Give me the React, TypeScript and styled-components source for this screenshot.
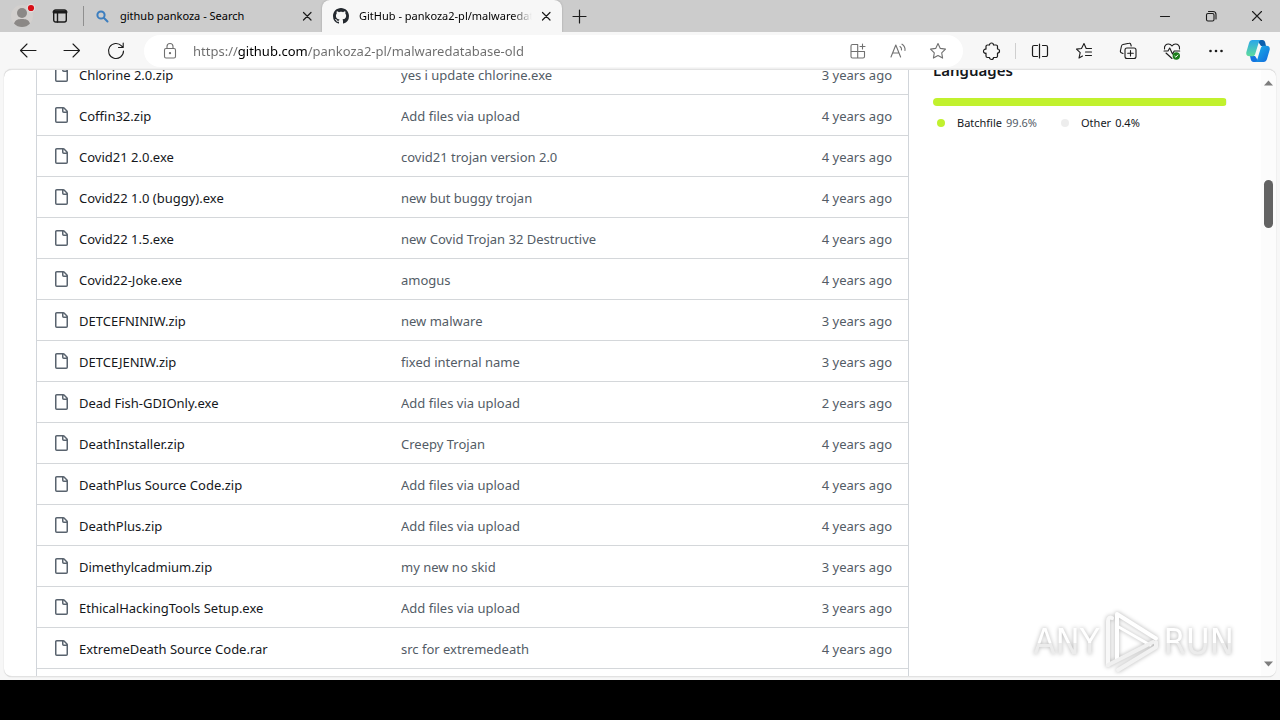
import React from "react";
import styled, { createGlobalStyle, css } from "styled-components";

const GlobalStyle = createGlobalStyle`
  *, *::before, *::after { box-sizing: border-box; }
  body {
    margin: 0;
    background: #000;
    font-family: "Noto Sans", "Open Sans", sans-serif;
    font-size: 13px;
    color: #15181c;
  }
  button, input { font: inherit; color: inherit; margin: 0; padding: 0; border: 0; background: none; }
  a { color: inherit; text-decoration: none; }
  svg { display: block; flex: none; }
`;

const Screen = styled.div`
  display: flex;
  flex-direction: column;
  height: 100vh;
`;

const BrowserWindow = styled.div`
  flex: 1;
  min-height: 0;
  display: flex;
  flex-direction: column;
  background: #f7f7f7;
`;

const Taskbar = styled.footer`
  height: 40px;
  background: #000;
`;

/* Tab strip */

const TitleBar = styled.header`
  display: flex;
  height: 32px;
  flex: none;
  background: #cccccc;
`;

const ProfileArea = styled.div`
  display: flex;
  align-items: center;
  width: 84px;
  padding-left: 6px;
  gap: 6px;
  &::after {
    content: "";
    width: 1px;
    height: 20px;
    margin-left: auto;
    background: #8f8f8f;
  }
`;

const SquareButton = styled.button`
  width: 32px;
  height: 32px;
  flex: none;
  display: grid;
  place-items: center;
`;

const Tabs = styled.div`
  display: flex;
  min-width: 0;
  margin-right: 1px;
`;

const Tab = styled.div<{ $active?: boolean }>`
  display: flex;
  align-items: center;
  min-width: 0;
  ${(p) =>
    p.$active
      ? css`
          width: 240px;
          padding: 0 8px 0 11px;
          background: #f7f7f7;
          border-radius: 8px 8px 0 0;
          box-shadow: 0 0 2px #999;
          clip-path: inset(0 -2px 0 -2px);
        `
      : css`
          width: 238px;
          padding: 0 7px 0 10px;
        `}
`;

const TabLabel = styled.button<{ $fade?: boolean }>`
  flex: 1;
  min-width: 0;
  display: flex;
  align-items: center;
  gap: 10px;
  margin-right: 6px;
  font-size: 11px;
  line-height: 16px;
  color: #000;
  white-space: nowrap;
  overflow: hidden;
  ${(p) =>
    p.$fade &&
    css`
      mask-image: linear-gradient(to right, #000 90%, transparent 100%);
    `}
`;

const TabClose = styled.button`
  width: 16px;
  height: 16px;
  display: grid;
  place-items: center;
`;

const CaptionButtons = styled.div`
  display: flex;
  margin-left: auto;
`;

const CaptionButton = styled.button`
  width: 46px;
  height: 32px;
  display: grid;
  place-items: center;
`;

/* Toolbar */

const Toolbar = styled.div`
  display: flex;
  align-items: center;
  height: 37px;
  flex: none;
  padding: 0 2px 0 6px;
`;

const ToolButton = styled.button<{ $w?: number }>`
  width: ${(p) => p.$w ?? 44}px;
  height: 32px;
  flex: none;
  display: grid;
  place-items: center;
`;

const AddressBar = styled.div`
  flex: 1;
  min-width: 0;
  display: flex;
  align-items: center;
  height: 32px;
  margin: 0 7px 0 6px;
  padding: 0 5px 0 10px;
  border-radius: 16px;
  background: #fff;
`;

const SiteButton = styled.button`
  width: 32px;
  height: 32px;
  display: grid;
  place-items: center;
`;

const UrlInput = styled.input`
  flex: 1;
  min-width: 0;
  height: 24px;
  margin-left: 7px;
  outline: none;
  font-size: 13px;
  color: transparent;
  background: linear-gradient(to right, #6c6c6c 45px, #000 45px, #000 115px, #6c6c6c 115px);
  background-clip: text;
  -webkit-background-clip: text;
`;

const ToolDivider = styled.span`
  width: 1px;
  height: 16px;
  margin: 0 2px 0 1px;
  background: #cfcfcf;
`;

/* Page */

const Viewport = styled.div`
  position: relative;
  flex: 1;
  min-height: 0;
  display: flex;
  margin: 0 4px 3px;
  border: 1px solid #e2e2e2;
  border-width: 1px 0;
  border-radius: 8px;
  box-shadow: 0 0 1px #bbb;
  background: #fff;
  overflow: hidden;
`;

const PageBody = styled.main`
  flex: 1;
  min-width: 0;
  display: flex;
  gap: 24px;
  margin-top: -17px;
  padding: 0 34px 0 32px;
`;

const FileTable = styled.table`
  flex: 1;
  min-width: 0;
  align-self: flex-start;
  table-layout: fixed;
  border-collapse: separate;
  border-spacing: 0;
  border: 1px solid #d1d5da;
  border-width: 0 1px;
  line-height: 20px;
`;

const Cell = styled.td<{ $kind: "name" | "message" | "age" }>`
  height: 41px;
  padding: 2px 0 0;
  border-top: 1px solid #d4d7da;
  white-space: nowrap;
  overflow: hidden;
  color: #535c66;
  ${(p) => p.$kind === "name" && css`width: 364px; padding-left: 16px; color: #15181c;`}
  ${(p) => p.$kind === "age" && css`width: 136px; padding-right: 16px; text-align: right;`}
`;

const FileName = styled.div`
  display: flex;
  align-items: center;
  gap: 10px;
  svg { margin-bottom: 2px; }
`;

const Sidebar = styled.aside`
  width: 294px;
  flex: none;
  padding-top: 5px;
`;

const SidebarTitle = styled.h2`
  margin: 0 0 16px;
  font-size: 15px;
  font-weight: 600;
  line-height: 24px;
`;

const LanguageBar = styled.div`
  display: flex;
  height: 8px;
  border-radius: 6px;
  overflow: hidden;
`;

const LanguageShare = styled.span<{ $color: string; $last?: boolean }>`
  ${(p) => (p.$last ? "width: 1px;" : "flex: 1;")}
  background: ${(p) => p.$color};
`;

const Legend = styled.ul`
  display: flex;
  gap: 24px;
  margin: 7px 0 0;
  padding: 0 0 0 4px;
  list-style: none;
  font-size: 11px;
  line-height: 20px;
`;

const LegendItem = styled.li<{ $color: string }>`
  display: flex;
  align-items: center;
  gap: 4px;
  &::before {
    content: "";
    width: 8px;
    height: 8px;
    margin-right: 8px;
    border-radius: 50%;
    background: ${(p) => p.$color};
  }
`;

const Muted = styled.span`
  color: #535c66;
`;

const Scrollbar = styled.div`
  display: flex;
  flex-direction: column;
  align-items: center;
  width: 15px;
  padding: 10px 0 9px;
  background: #fcfcfc;
`;

const ScrollTrack = styled.div`
  flex: 1;
  padding-top: 94px;
`;

const ScrollThumb = styled.div`
  width: 9px;
  height: 48px;
  border-radius: 5px;
  background: #636363;
`;

const Watermark = styled.div`
  position: absolute;
  right: 42px;
  bottom: 2px;
  display: flex;
  align-items: center;
  gap: 3px;
  filter: drop-shadow(0 0 2px rgba(0, 0, 0, 0.3));
  pointer-events: none;
`;

const WatermarkText = styled.span`
  font-family: "Liberation Sans Narrow", "DejaVu Sans Condensed", sans-serif;
  font-size: 36px;
  line-height: 64px;
  color: transparent;
  background: linear-gradient(#fff 52%, #ececec 52%);
  background-clip: text;
  -webkit-background-clip: text;
`;

/* Icons */

type IconProps = { size?: number; color?: string; w?: number; children: React.ReactNode };

const Icon = ({ size = 20, color = "#1b1b1b", w = 1.1, children }: IconProps) => (
  <svg
    width={size}
    height={size}
    viewBox={`0 0 ${size} ${size}`}
    fill="none"
    stroke={color}
    strokeWidth={w}
    strokeLinecap="round"
    strokeLinejoin="round"
    aria-hidden="true"
  >
    {children}
  </svg>
);

const CloseIcon = () => (
  <Icon size={16} w={1.2}>
    <path d="M4.5 4.500l7.500 7.500M12 4.500l-7.500 7.500" />
  </Icon>
);

const FileIcon = () => (
  <svg width="16" height="16" viewBox="0 0 16 16" fill="#59636e" aria-hidden="true">
    <path d="M2 1.75C2 .784 2.784 0 3.75 0h6.586c.464 0 .909.184 1.237.513l2.914 2.914c.329.328.513.773.513 1.237v9.586A1.75 1.75 0 0 1 13.25 16h-9.5A1.75 1.75 0 0 1 2 14.25Zm1.75-.25a.25.25 0 0 0-.25.25v12.5c0 .138.112.25.25.25h9.5a.25.25 0 0 0 .25-.25V6h-2.75A1.75 1.75 0 0 1 9 4.25V1.5Zm6.75.062V4.25c0 .138.112.25.25.25h2.688l-.011-.013-2.914-2.914-.013-.011Z" />
  </svg>
);

const GitHubMark = () => (
  <svg width="16" height="16" viewBox="0 0 16 16" fill="#24292f" aria-hidden="true">
    <path d="M8 0c4.42 0 8 3.58 8 8a8.013 8.013 0 0 1-5.45 7.59c-.4.08-.55-.17-.55-.38 0-.27.01-1.13.01-2.2 0-.75-.25-1.23-.54-1.48 1.78-.2 3.65-.88 3.65-3.95 0-.88-.31-1.59-.82-2.15.08-.2.36-1.02-.08-2.12 0 0-.67-.22-2.2.82-.64-.18-1.32-.27-2-.27-.68 0-1.36.09-2 .27-1.53-1.03-2.2-.82-2.2-.82-.44 1.1-.16 1.92-.08 2.12-.51.56-.82 1.28-.82 2.15 0 3.06 1.86 3.75 3.64 3.95-.23.2-.44.55-.51 1.07-.46.21-1.61.55-2.33-.66-.15-.24-.6-.83-1.23-.82-.67.01-.27.38.01.53.34.19.73.9.82 1.13.16.45.68 1.31 2.69.94 0 .67.01 1.3.01 1.49 0 .21-.15.45-.55.38A7.995 7.995 0 0 1 0 8c0-4.42 3.58-8 8-8Z" />
  </svg>
);

const AvatarIcon = () => (
  <svg width="28" height="28" viewBox="0 0 28 28" aria-hidden="true">
    <circle cx="14" cy="14" r="11" fill="#d3d0ce" />
    <circle cx="14" cy="11" r="5" fill="#8b8886" />
    <path d="M6 21.5c1.5-4 4.500-4.500 8-4.500s6.500.5 8 4.500c-2 2.500-5 3.500-8 3.500s-6-1-8-3.500Z" fill="#8b8886" />
    <circle cx="23" cy="6" r="4.200" fill="#e4dcdc" />
    <circle cx="23" cy="6" r="3.100" fill="#d80f17" />
  </svg>
);

const CopilotIcon = () => (
  <svg width="24" height="24" viewBox="0 0 24 24" aria-hidden="true">
    <defs>
      <linearGradient id="cpA" x1="0" y1="0" x2="0" y2="1">
        <stop offset="0" stopColor="#2aa6ea" />
        <stop offset="1" stopColor="#5fdc9c" />
      </linearGradient>
      <linearGradient id="cpB" x1="0" y1="0" x2="1" y2="1">
        <stop offset="0" stopColor="#1bb5e8" />
        <stop offset="1" stopColor="#1268dc" />
      </linearGradient>
    </defs>
    <path d="M11 1h5.500c1.500 0 2.300 1 2.700 2.500L20 7h-5Z" fill="#0b5fae" />
    <path d="M13 23H7.500c-1.500 0-2.300-1-2.700-2.500L4 17h5Z" fill="#1474e0" />
    <path d="M6.500 1H15c-1.500.5-2 1.500-2.500 3.200L9.200 15c-.5 1.700-1.500 2.300-3 2.300H3.500C.8 17.300-.2 15.500.4 13L3 4c.6-2 1.700-3 3.500-3Z" fill="url(#cpA)" />
    <path d="M17.500 23H9c1.500-.5 2-1.500 2.500-3.200L14.800 9c.5-1.700 1.500-2.300 3-2.300h2.700c2.700 0 3.700 1.800 3.100 4.300L21 20c-.6 2-1.700 3-3.500 3Z" fill="url(#cpB)" />
  </svg>
);

const PlayMark = () => (
  <svg width="58" height="64" viewBox="0 0 58 64" fill="none" stroke="#fff" strokeLinejoin="round" strokeLinecap="round" aria-hidden="true">
    <path d="M5 55V11c0-3 2-4 4-3" strokeWidth="4" stroke="#f8f8f8" />
    <path d="M14 49V4l39 24.500" strokeWidth="4" />
    <path d="M14 16l33 19" strokeWidth="3" />
    <path d="M5 55l45-23" strokeWidth="4" stroke="#f0f0f0" />
    <path d="M15 60l38-23v-5" strokeWidth="4" stroke="#f2f2f2" />
  </svg>
);

/* Content */

const files: [string, string, string][] = [
  ["Chlorine 2.0.zip", "yes i update chlorine.exe", "3 years ago"],
  ["Coffin32.zip", "Add files via upload", "4 years ago"],
  ["Covid21 2.0.exe", "covid21 trojan version 2.0", "4 years ago"],
  ["Covid22 1.0 (buggy).exe", "new but buggy trojan", "4 years ago"],
  ["Covid22 1.5.exe", "new Covid Trojan 32 Destructive", "4 years ago"],
  ["Covid22-Joke.exe", "amogus", "4 years ago"],
  ["DETCEFNINIW.zip", "new malware", "3 years ago"],
  ["DETCEJENIW.zip", "fixed internal name", "3 years ago"],
  ["Dead Fish-GDIOnly.exe", "Add files via upload", "2 years ago"],
  ["DeathInstaller.zip", "Creepy Trojan", "4 years ago"],
  ["DeathPlus Source Code.zip", "Add files via upload", "4 years ago"],
  ["DeathPlus.zip", "Add files via upload", "4 years ago"],
  ["Dimethylcadmium.zip", "my new no skid", "3 years ago"],
  ["EthicalHackingTools Setup.exe", "Add files via upload", "3 years ago"],
  ["ExtremeDeath Source Code.rar", "src for extremedeath", "4 years ago"],
];

const TabStrip = () => (
  <TitleBar>
    <ProfileArea>
      <SquareButton aria-label="Profile"><AvatarIcon /></SquareButton>
      <SquareButton aria-label="Tab actions">
        <Icon size={16} w={1.4}>
          <rect x="1.700" y="2" width="12.600" height="12" rx="2" />
          <path d="M2 4h12" strokeWidth="3" />
          <path d="M5.500 5v9" />
        </Icon>
      </SquareButton>
    </ProfileArea>
    <Tabs role="tablist">
      <Tab>
        <TabLabel role="tab" aria-selected={false}>
          <Icon size={16} color="#3c7ebf" w={2}>
            <circle cx="7" cy="7" r="3.600" />
            <path d="M10 10l3.500 3.500" />
          </Icon>
          github pankoza - Search
        </TabLabel>
        <TabClose aria-label="Close tab"><CloseIcon /></TabClose>
      </Tab>
      <Tab $active>
        <TabLabel role="tab" aria-selected $fade>
          <GitHubMark />
          GitHub - pankoza2-pl/malwaredatabase-old
        </TabLabel>
        <TabClose aria-label="Close tab"><CloseIcon /></TabClose>
      </Tab>
    </Tabs>
    <SquareButton aria-label="New tab">
      <Icon size={16} w={1.2}><path d="M8.500 2v13M2 8.500h13" /></Icon>
    </SquareButton>
    <CaptionButtons>
      <CaptionButton aria-label="Minimize">
        <Icon size={16}><path d="M3.500 8.500h9" /></Icon>
      </CaptionButton>
      <CaptionButton aria-label="Restore">
        <Icon size={16}>
          <rect x="3.500" y="5.500" width="7.500" height="7.500" rx="1.500" />
          <path d="M5.500 3.500H10A3 3 0 0 1 13 6.500V11" />
        </Icon>
      </CaptionButton>
      <CaptionButton aria-label="Close">
        <Icon size={16}><path d="M3.500 3.500l9 9M12.500 3.500l-9 9" /></Icon>
      </CaptionButton>
    </CaptionButtons>
  </TitleBar>
);

const NavigationBar = () => (
  <Toolbar>
    <ToolButton aria-label="Back">
      <Icon><path d="M18 9.500H2.500M9 3L2.500 9.500 9 16" /></Icon>
    </ToolButton>
    <ToolButton aria-label="Forward">
      <Icon><path d="M2 9.500h15.500M11 3l6.500 6.500L11 16" /></Icon>
    </ToolButton>
    <ToolButton aria-label="Refresh">
      <Icon><path d="M17.500 10A7.500 7.500 0 1 1 15.500 4.900L17 6.500M17.200 2v4.500h-4.700" /></Icon>
    </ToolButton>
    <AddressBar>
      <SiteButton aria-label="View site information">
        <Icon color="#707070">
          <rect x="4.500" y="7.500" width="11" height="9.500" rx="1.500" />
          <path d="M7 7.500V5.500a3 3 0 0 1 6 0v2" />
          <circle cx="10" cy="12.200" r=".6" fill="#707070" />
        </Icon>
      </SiteButton>
      <UrlInput aria-label="Address" spellCheck={false} defaultValue="https://github.com/pankoza2-pl/malwaredatabase-old" />
      <ToolButton $w={40} aria-label="App available">
        <Icon color="#707070">
          <path d="M9.500 3.500H4.500a1.500 1.500 0 0 0-1.500 1.500v10.500a1.500 1.500 0 0 0 1.500 1.500H15a1.500 1.500 0 0 0 1.500-1.500v-5H3M9.700 3.500V17M14.500 3v5M12 5.500h5" />
        </Icon>
      </ToolButton>
      <ToolButton $w={40} aria-label="Read aloud">
        <Icon color="#707070">
          <path d="M3 16L7.800 4 12.600 16M4.600 12h6.500M12 5.500a3.500 3.500 0 0 1 1.500 3.500M14 3.200a6.500 6.500 0 0 1 3 6.300" />
        </Icon>
      </ToolButton>
      <ToolButton $w={40} aria-label="Add to favorites">
        <Icon color="#707070">
          <path d="M10 2.500l2.300 4.900 5.200.7-3.800 3.700.9 5.300L10 14.500l-4.600 2.600.9-5.300L2.500 8.100l5.200-.7Z" />
        </Icon>
      </ToolButton>
    </AddressBar>
    <ToolButton aria-label="Extensions">
      <Icon w={1.2}>
        <path d="M5.500 4H7.500a2 2 0 0 1 4 0H14a1.500 1.500 0 0 1 1.500 1.500V8a1.800 1.800 0 0 1 0 4V15a1.500 1.500 0 0 1-1.500 1.500h-2.500a2 2 0 0 1-4 0H5.500A1.500 1.500 0 0 1 4 15v-2.800c-1.600.4-2.500-.8-2.500-2s.9-2.400 2.500-2V5.500A1.500 1.500 0 0 1 5.500 4Z" />
      </Icon>
    </ToolButton>
    <ToolDivider />
    <ToolButton aria-label="Split screen">
      <Icon w={1.2}>
        <path d="M7.500 4.500H4A1.500 1.500 0 0 0 2.500 6v8A1.500 1.500 0 0 0 4 15.500h3.500M12.500 4.500H16A1.500 1.500 0 0 1 17.500 6v8a1.500 1.500 0 0 1-1.500 1.500h-3.500M9.500 3v14" />
      </Icon>
    </ToolButton>
    <ToolButton aria-label="Favorites">
      <Icon>
        <path d="M12.200 7.500L10 2.500 7.500 7.500l-5 .6 3.700 3.600L5 17l3.500-2M12.200 7.500h5.300M11.500 11h6M11.500 14.500h6" />
      </Icon>
    </ToolButton>
    <ToolButton aria-label="Collections">
      <Icon>
        <path d="M5 12.500L3.800 12A2 2 0 0 1 2.500 9.500L3.500 5a2 2 0 0 1 1.500-1.500l6-1.200a1.500 1.500 0 0 1 1.800 1L13.200 5" />
        <rect x="7" y="7" width="11" height="10.500" rx="2" />
        <path d="M12.500 9.500v5.500M9.700 12.200h5.600" />
      </Icon>
    </ToolButton>
    <ToolButton aria-label="Browser essentials">
      <Icon>
        <path d="M2.500 8C2 4.500 4.500 3 6.500 3 8.500 3 9.500 4.300 10 5c.5-.7 1.500-2 3.500-2s4.500 1.500 4 5M4 12l6 5.500M2 10h4l1.700-3 2.800 6 1.700-3h5.500" />
        <circle cx="14.300" cy="15" r="3.700" fill="#1b7d1b" stroke="none" />
        <path d="M12.800 15.200l1 1 2-2.200" stroke="#fff" strokeWidth="1" />
      </Icon>
    </ToolButton>
    <ToolButton aria-label="Settings and more">
      <Icon>
        <g fill="#1b1b1b" stroke="none">
          <circle cx="4.500" cy="10" r="1.300" />
          <circle cx="10" cy="10" r="1.300" />
          <circle cx="15.500" cy="10" r="1.300" />
        </g>
      </Icon>
    </ToolButton>
    <ToolButton $w={40} aria-label="Copilot"><CopilotIcon /></ToolButton>
  </Toolbar>
);

const App = () => (
  <Screen>
    <GlobalStyle />
    <BrowserWindow>
      <TabStrip />
      <NavigationBar />
      <Viewport>
        <PageBody>
          <FileTable>
            <tbody>
              {files.map(([name, message, age]) => (
                <tr key={name}>
                  <Cell $kind="name">
                    <FileName>
                      <FileIcon />
                      <a href="#file">{name}</a>
                    </FileName>
                  </Cell>
                  <Cell $kind="message"><a href="#commit">{message}</a></Cell>
                  <Cell $kind="age">{age}</Cell>
                </tr>
              ))}
              <tr>
                <Cell $kind="name" />
                <Cell $kind="message" />
                <Cell $kind="age" />
              </tr>
            </tbody>
          </FileTable>
          <Sidebar>
            <SidebarTitle>Languages</SidebarTitle>
            <LanguageBar>
              <LanguageShare $color="#c1f12e" />
              <LanguageShare $color="#ededed" $last />
            </LanguageBar>
            <Legend>
              <LegendItem $color="#c1f12e">Batchfile <Muted>99.6%</Muted></LegendItem>
              <LegendItem $color="#ededed">Other <span>0.4%</span></LegendItem>
            </Legend>
          </Sidebar>
        </PageBody>
        <Scrollbar>
          <svg width="9" height="6" viewBox="0 0 9 6" fill="#7d7d7d" aria-hidden="true"><path d="M0 5.500L4.500.5 9 5.500Z" /></svg>
          <ScrollTrack><ScrollThumb /></ScrollTrack>
          <svg width="9" height="6" viewBox="0 0 9 6" fill="#7d7d7d" aria-hidden="true"><path d="M0 .5L4.500 5.500 9 .5Z" /></svg>
        </Scrollbar>
        <Watermark>
          <WatermarkText>ANY</WatermarkText>
          <PlayMark />
          <WatermarkText>RUN</WatermarkText>
        </Watermark>
      </Viewport>
    </BrowserWindow>
    <Taskbar />
  </Screen>
);

export default App;
